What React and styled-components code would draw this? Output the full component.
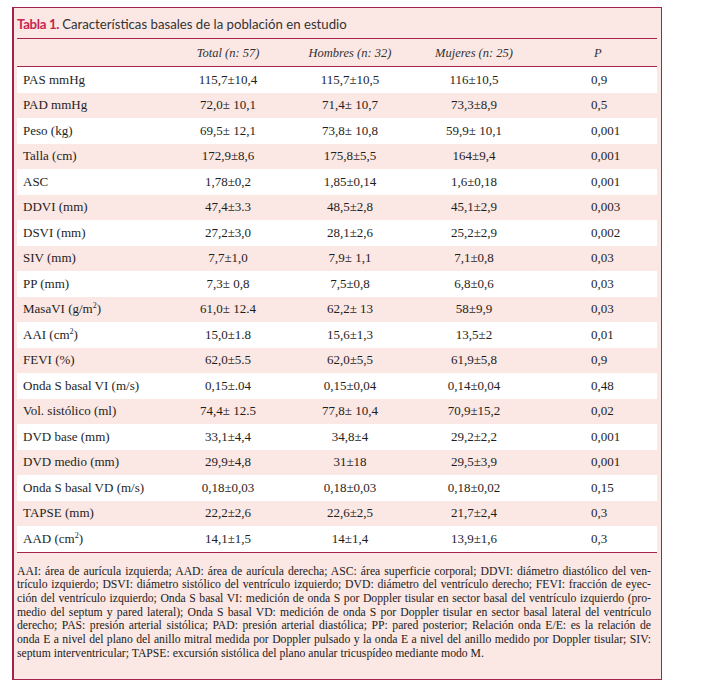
import React from 'react';
import styled, { createGlobalStyle } from 'styled-components';

const GlobalStyle = createGlobalStyle`
  body {
    margin: 0;
    background: #ffffff;
  }
`;

const CRIMSON = '#a3234b';
const PINK = '#fbe7e3';

const Frame = styled.div`
  box-sizing: border-box;
  width: 650px;
  height: 673px;
  margin: 7px 0 0 12px;
  padding: 0 4px 0 3px;
  border: 1px solid ${CRIMSON};
  border-left-width: 2px;
  background: ${PINK};
`;

const Title = styled.div`
  height: 31px;
  display: flex;
  align-items: center;
  padding-top: 1px;
  box-sizing: border-box;
  border-bottom: 1px solid ${CRIMSON};
  font-family: Lato, "Open Sans", sans-serif;
  font-size: 13.2px;
  color: #333;
  white-space: nowrap;
`;

const TitleTag = styled.span`
  color: #c8244f;
  font-weight: 700;
  margin-right: 3px;
  letter-spacing: -0.3px;
`;

const Row = styled.div`
  display: grid;
  grid-template-columns: 150px 122px 122px 126px 1fr;
  align-items: center;
  height: ${(p) => p.$h || 25.5}px;
  background: ${(p) => (p.$white ? '#ffffff' : 'transparent')};
  font-family: "Liberation Serif", "Times New Roman", serif;
  font-size: 13px;
  color: #1e1e1e;
`;

const HeadRow = styled(Row)`
  align-items: end;
  padding-bottom: 5px;
  box-sizing: border-box;
  border-bottom: 1px solid ${CRIMSON};
  font-style: italic;
  font-size: 12.5px;
  color: #333;
`;

const Label = styled.div`
  padding-left: 6px;
  white-space: nowrap;
`;

const Value = styled.div`
  text-align: center;
  white-space: nowrap;
`;

const PValue = styled.div`
  padding-left: ${(p) => (p.$head ? 57 : 54)}px;
  white-space: nowrap;
`;

const Body = styled.div`
  border-bottom: 1px solid ${CRIMSON};
`;

const Notes = styled.div`
  padding: 12px 6px 0 0;
  font-family: "Liberation Serif", "Times New Roman", serif;
  font-size: 11.7px;
  line-height: 13.7px;
  color: #222;
`;

const NoteLine = styled.div`
  white-space: nowrap;
  text-align: ${(p) => (p.$last ? 'left' : 'justify')};
  text-align-last: ${(p) => (p.$last ? 'left' : 'justify')};
`;

const sq = <sup style={{ fontSize: '8px' }}>2</sup>;

const rows = [
  ['PAS mmHg', '115,7±10,4', '115,7±10,5', '116±10,5', '0,9'],
  ['PAD mmHg', '72,0± 10,1', '71,4± 10,7', '73,3±8,9', '0,5'],
  ['Peso (kg)', '69,5± 12,1', '73,8± 10,8', '59,9± 10,1', '0,001'],
  ['Talla (cm)', '172,9±8,6', '175,8±5,5', '164±9,4', '0,001'],
  ['ASC', '1,78±0,2', '1,85±0,14', '1,6±0,18', '0,001'],
  ['DDVI (mm)', '47,4±3.3', '48,5±2,8', '45,1±2,9', '0,003'],
  ['DSVI (mm)', '27,2±3,0', '28,1±2,6', '25,2±2,9', '0,002'],
  ['SIV (mm)', '7,7±1,0', '7,9± 1,1', '7,1±0,8', '0,03'],
  ['PP (mm)', '7,3± 0,8', '7,5±0,8', '6,8±0,6', '0,03'],
  [<>MasaVI (g/m{sq})</>, '61,0± 12.4', '62,2± 13', '58±9,9', '0,03'],
  [<>AAI (cm{sq})</>, '15,0±1.8', '15,6±1,3', '13,5±2', '0,01'],
  ['FEVI (%)', '62,0±5.5', '62,0±5,5', '61,9±5,8', '0,9'],
  ['Onda S basal VI (m/s)', '0,15±.04', '0,15±0,04', '0,14±0,04', '0,48'],
  ['Vol. sistólico (ml)', '74,4± 12.5', '77,8± 10,4', '70,9±15,2', '0,02'],
  ['DVD base (mm)', '33,1±4,4', '34,8±4', '29,2±2,2', '0,001'],
  ['DVD medio (mm)', '29,9±4,8', '31±18', '29,5±3,9', '0,001'],
  ['Onda S basal VD (m/s)', '0,18±0,03', '0,18±0,03', '0,18±0,02', '0,15'],
  ['TAPSE (mm)', '22,2±2,6', '22,6±2,5', '21,7±2,4', '0,3'],
  [<>AAD (cm{sq})</>, '14,1±1,5', '14±1,4', '13,9±1,6', '0,3'],
];

const notes = [
  'AAI: área de aurícula izquierda; AAD: área de aurícula derecha; ASC: área superficie corporal; DDVI: diámetro diastólico del ven-',
  'trículo izquierdo; DSVI: diámetro sistólico del ventrículo izquierdo; DVD: diámetro del ventrículo derecho; FEVI: fracción de eyec-',
  'ción del ventrículo izquierdo; Onda S basal VI: medición de onda S por Doppler tisular en sector basal del ventrículo izquierdo (pro-',
  'medio del septum y pared lateral); Onda S basal VD: medición de onda S por Doppler tisular en sector basal lateral del ventrículo',
  'derecho; PAS: presión arterial sistólica; PAD: presión arterial diastólica; PP: pared posterior; Relación onda E/E: es la relación de',
  'onda E a nivel del plano del anillo mitral medida por Doppler pulsado y la onda E a nivel del anillo medido por Doppler tisular; SIV:',
  'septum interventricular; TAPSE: excursión sistólica del plano anular tricuspídeo mediante modo M.',
];

export default function App() {
  return (
    <>
      <GlobalStyle />
      <Frame>
        <Title>
          <TitleTag>Tabla 1.</TitleTag>
          Características basales de la población en estudio
        </Title>
        <HeadRow $h={28}>
          <Label />
          <Value>Total (n: 57)</Value>
          <Value>Hombres (n: 32)</Value>
          <Value>Mujeres (n: 25)</Value>
          <PValue $head>P</PValue>
        </HeadRow>
        <Body>
          {rows.map((r, i) => (
            <Row key={i} $white={i % 2 === 0}>
              <Label>{r[0]}</Label>
              <Value>{r[1]}</Value>
              <Value>{r[2]}</Value>
              <Value>{r[3]}</Value>
              <PValue>{r[4]}</PValue>
            </Row>
          ))}
        </Body>
        <Notes>
          {notes.map((n, i) => (
            <NoteLine key={i} $last={i === notes.length - 1}>
              {n}
            </NoteLine>
          ))}
        </Notes>
      </Frame>
    </>
  );
}
